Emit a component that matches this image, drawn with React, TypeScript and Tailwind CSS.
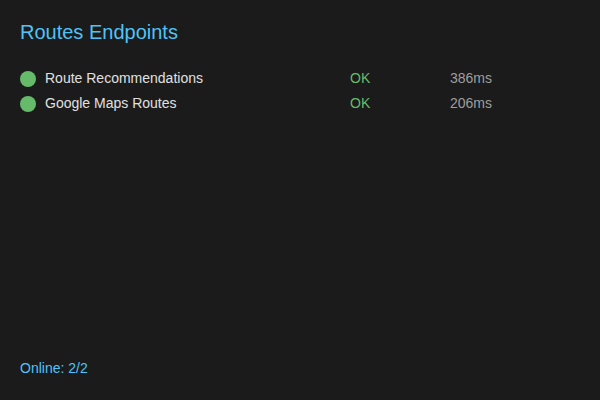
import React from "react";

const rows = [
  { name: "Route Recommendations", status: "OK", ms: "386ms" },
  { name: "Google Maps Routes", status: "OK", ms: "206ms" },
];

export default function App() {
  return (
    <div
      className="flex h-[400px] w-[600px] flex-col bg-[#1b1b1b] px-5 pt-5 pb-6"
      style={{ fontFamily: '"Liberation Sans", Arial, sans-serif' }}
    >
      <h1 className="text-[20px] leading-6 text-[#4fc3f7]">Routes Endpoints</h1>
      <div className="mt-[22px] flex flex-col">
        {rows.map((r) => (
          <div key={r.name} className="flex h-[25px] items-center text-[14px]">
            <span className="h-4 w-4 shrink-0 rounded-full bg-[#66bb6a]" />
            <span className="ml-[9px] w-[305px] text-[#e0e0e0]">{r.name}</span>
            <span className="w-[100px] text-[#66bb6a]">{r.status}</span>
            <span className="text-[#9e9e9e]">{r.ms}</span>
          </div>
        ))}
      </div>
      <div className="mt-auto text-[14px] leading-4 text-[#4fc3f7]">Online: 2/2</div>
    </div>
  );
}
